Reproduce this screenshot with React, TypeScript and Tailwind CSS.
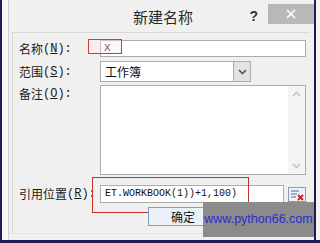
import React from 'react';

const cjk = { fontFamily: '"Noto Sans CJK SC", "Liberation Sans", sans-serif' };
const mono = { fontFamily: '"Liberation Mono", "Noto Sans CJK SC", monospace' };

function Label({ text, keyChar }: { text: string; keyChar: string }) {
  return (
    <div className="flex items-center text-[12px] leading-none text-[#1a1a1a] h-full">
      <span style={cjk}>{text}</span>
      <span className="text-[12px]" style={mono}>
        (<span className="underline underline-offset-1">{keyChar}</span>):
      </span>
    </div>
  );
}

function Chevron({ up }: { up?: boolean }) {
  return (
    <svg width="9" height="6" viewBox="0 0 9 6">
      <path
        d={up ? 'M1 5 L4.5 1.5 L8 5' : 'M1 1 L4.5 4.5 L8 1'}
        stroke="currentColor"
        strokeWidth="1.6"
        fill="none"
      />
    </svg>
  );
}

export default function App() {
  return (
    <div className="relative w-[320px] h-[243px] overflow-hidden flex flex-col bg-[#f5f5f5]">
      <div className="flex h-[240px]">
        <div className="w-[2px] bg-[#1d1d52]" />
        <div className="w-[6px] bg-[#f6f6f6]" />

        {/* dialog */}
        <div className="w-[306px] flex flex-col bg-[#f0f0f0] border-l border-[#cfcfcf]">
          <div className="h-[32px] flex items-start">
            <div className="pl-[124px] pt-[7px] text-[15px] leading-[20px] text-[#2a2a2a]" style={cjk}>
              新建名称
            </div>
            <div className="ml-auto pt-[6px] pr-[10px] text-[14px] font-bold text-[#333]" style={{ fontFamily: '"Liberation Sans", sans-serif' }}>
              ?
            </div>
            <div className="mt-[4px] w-[46px] h-[20px] bg-[#b8b8b8] flex items-center justify-center">
              <svg width="10" height="10" viewBox="0 0 10 10">
                <path d="M1 1 L9 9 M9 1 L1 9" stroke="#ffffff" strokeWidth="1.6" />
              </svg>
            </div>
          </div>

          {/* content panel */}
          <div className="relative ml-[3px] mr-[4px] h-[201px] border-t border-l border-[#d9d9d9] bg-[#f0f0f0] pl-[6px] pr-[2px] pt-[7px] flex flex-col">
            <div className="grid grid-cols-[81px_206px] h-[17px]">
              <Label text="名称" keyChar="N" />
              <div className="bg-white border border-[#acacac] flex items-center pl-[3px]">
                <span className="text-[11px] leading-none text-[#000]" style={mono}>X</span>
              </div>
            </div>

            <div className="grid grid-cols-[81px_151px] h-[21px] mt-[4px]">
              <Label text="范围" keyChar="S" />
              <div className="bg-white border border-[#acacac] flex items-center">
                <span className="pl-[4px] text-[12px] leading-none text-[#111]" style={cjk}>工作簿</span>
                <div className="ml-auto h-full w-[17px] bg-[#e3e3e3] border-l border-[#acacac] flex items-center justify-center text-[#555]">
                  <Chevron />
                </div>
              </div>
            </div>

            <div className="grid grid-cols-[81px_206px] h-[90px] mt-[3px]">
              <div className="h-[15px] mt-[1px]">
                <Label text="备注" keyChar="O" />
              </div>
              <div className="bg-white border border-[#acacac] flex justify-end">
                <div className="w-[17px] bg-[#f4f4f4] flex flex-col items-center justify-between py-[5px] text-[#c2c2c2]">
                  <Chevron up />
                  <Chevron />
                </div>
              </div>
            </div>

            <div className="grid grid-cols-[81px_184px_22px] h-[18px] mt-[10px]">
              <Label text="引用位置" keyChar="R" />
              <div className="bg-white border border-[#acacac] flex items-center pl-[4px] overflow-hidden">
                <span className="text-[10px] leading-none text-[#111] whitespace-nowrap" style={mono}>
                  ET.WORKBOOK(1))+1,100)
                </span>
              </div>
              <div className="flex items-center justify-end">
                <svg width="18" height="15" viewBox="0 0 18 15">
                  <rect x="0.5" y="0.5" width="17" height="14" fill="#eef2f8" stroke="#8a9ab5" />
                  <path d="M3 4 H11 M3 7 H9 M3 10 H8" stroke="#4a6aa8" strokeWidth="1.2" />
                  <path d="M10 8 L15 13 M15 8 L10 13" stroke="#c82020" strokeWidth="1.8" />
                </svg>
              </div>
            </div>

            <div className="mt-[4px] ml-[129px] w-[70px] h-[19px] border border-[#7f9dc0] bg-[#eaf1f8] flex items-center justify-center relative z-10">
              <span className="text-[12px] leading-none text-[#111]" style={cjk}>确定</span>
            </div>

            {/* red annotation boxes */}
            <div className="absolute left-[75px] top-[6px] w-[34px] h-[15px] border border-[#d23a3a] bg-[#ffeaea]/40" />
            <div className="absolute left-[79px] top-[144px] w-[157px] h-[36px] border border-[#c83030]" />
          </div>

          <div className="flex-1 border-t border-[#e2e2e2]" />
        </div>

        <div className="w-[2px] bg-[#1d1d52]" />
        <div className="flex-1 bg-[#f4f4f4]" />
      </div>
      <div className="h-[3px] bg-[#1d1d52]" />

      {/* watermark */}
      <div
        className="absolute z-20 left-[203px] top-[202px] w-[111px] h-[35px] bg-[#8b8b8b] flex items-center justify-center text-[12.5px] text-[#2b2bd0] whitespace-nowrap"
        style={{ fontFamily: '"Liberation Sans", sans-serif' }}
      >
        www.python66.com
      </div>
    </div>
  );
}
